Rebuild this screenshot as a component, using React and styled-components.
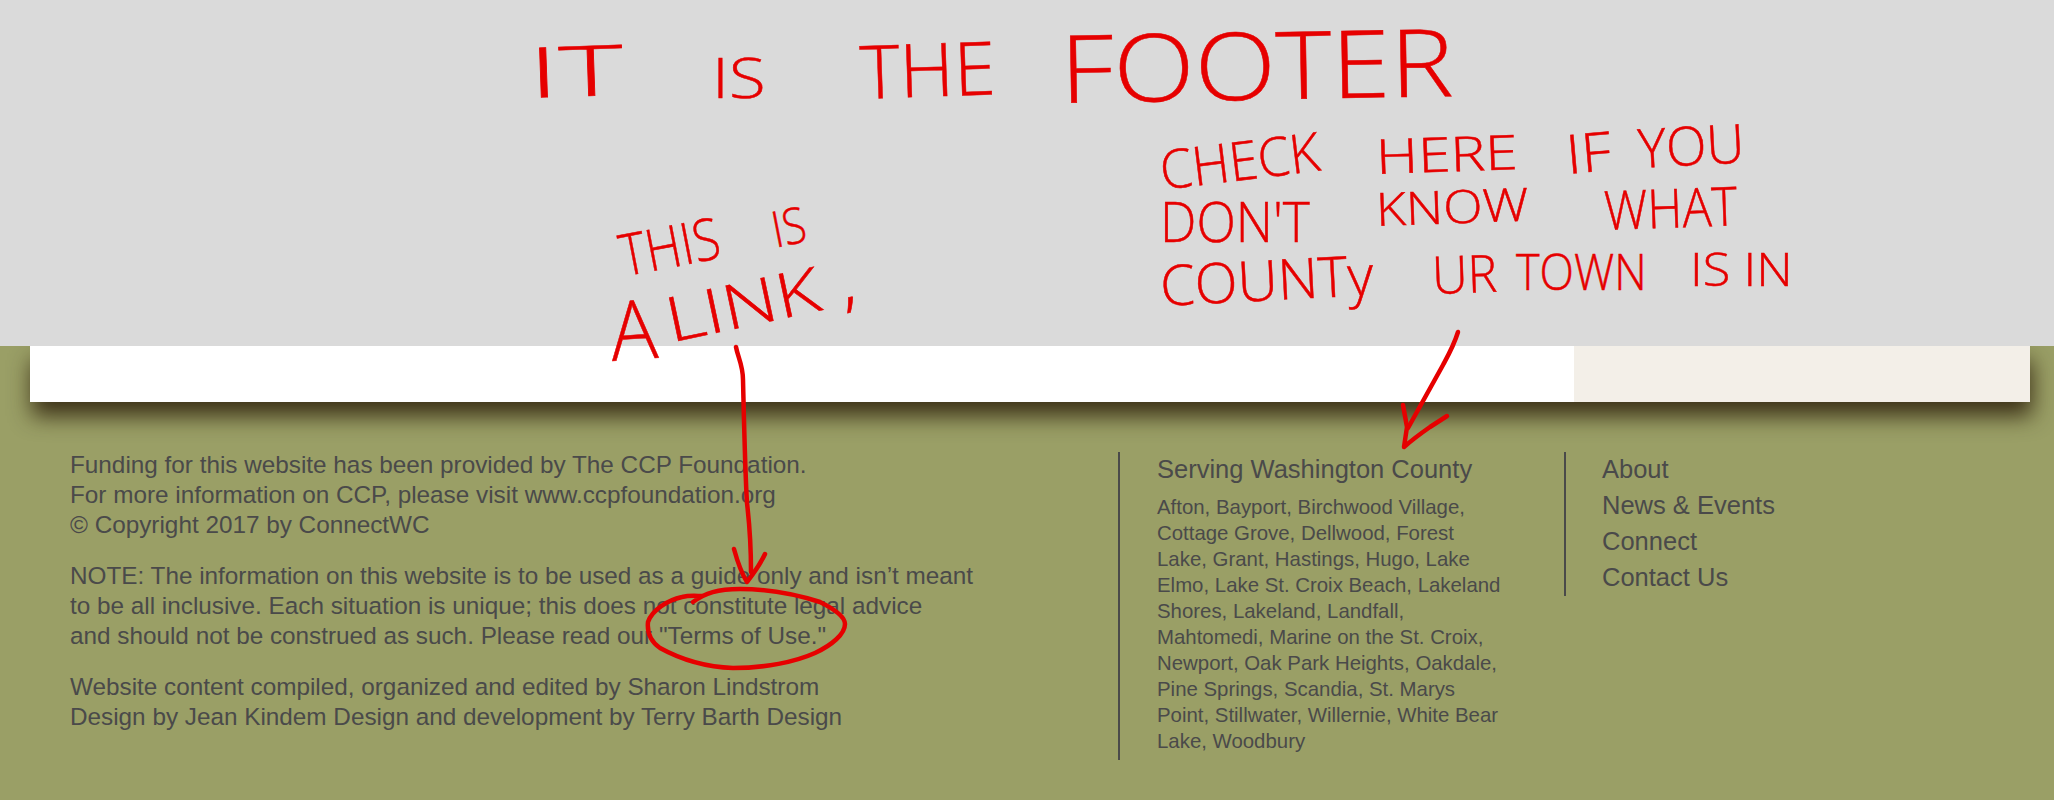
import React from "react";
import styled, { createGlobalStyle } from "styled-components";

const scrawls = [
  { text: "IT", x: 528, y: 36, size: 70, rot: -2, sx: 1.75 },
  { text: "IS", x: 712, y: 48, size: 56, rot: 0, sx: 1.2 },
  { text: "THE", x: 860, y: 34, size: 74, rot: -2, sx: 1.02 },
  { text: "FOOTER", x: 1060, y: 20, size: 94, rot: -1, sx: 1.13 },

  { text: "CHECK", x: 1160, y: 142, size: 54, rot: -7, sx: 0.96 },
  { text: "HERE", x: 1376, y: 132, size: 48, rot: -2, sx: 1.22 },
  { text: "IF", x: 1566, y: 126, size: 54, rot: -5, sx: 1.1 },
  { text: "YOU", x: 1638, y: 120, size: 54, rot: -3, sx: 0.98 },

  { text: "DON'T", x: 1160, y: 192, size: 56, rot: 0, sx: 0.92 },
  { text: "KNOW", x: 1376, y: 186, size: 46, rot: -2, sx: 1.12 },
  { text: "WHAT", x: 1604, y: 182, size: 54, rot: -2, sx: 0.9 },

  { text: "COUNTy", x: 1160, y: 256, size: 56, rot: -3, sx: 1.0 },
  { text: "UR", x: 1432, y: 248, size: 52, rot: -2, sx: 0.95 },
  { text: "TOWN", x: 1516, y: 246, size: 50, rot: 0, sx: 0.9 },
  { text: "IS IN", x: 1690, y: 246, size: 46, rot: 0, sx: 1.1 },

  { text: "THIS", x: 620, y: 226, size: 58, rot: -11, sx: 0.85 },
  { text: "IS", x: 772, y: 204, size: 50, rot: -11, sx: 0.85 },
  { text: "A", x: 610, y: 288, size: 82, rot: -4, sx: 0.95 },
  { text: "LINK ,", x: 666, y: 288, size: 62, rot: -12, sx: 1.22 },
];

const links = ["About", "News & Events", "Connect", "Contact Us"];

const App = () => (
  <Page>
    <GlobalStyle />
    <Note />
    <Footer>
      <Card>
        <CardMain />
        <CardAside />
      </Card>
      <Columns>
        <Credits>
          <Para>
            Funding for this website has been provided by The CCP Foundation.
            <br />
            For more information on CCP, please visit www.ccpfoundation.org
            <br />© Copyright 2017 by ConnectWC
          </Para>
          <Para>
            NOTE: The information on this website is to be used as a guide only and isn’t meant
            <br />
            to be all inclusive. Each situation is unique; this does not constitute legal advice
            <br />
            and should not be construed as such. Please read our <TermsLink href="#">"Terms of Use."</TermsLink>
          </Para>
          <Para>
            Website content compiled, organized and edited by Sharon Lindstrom
            <br />
            Design by Jean Kindem Design and development by Terry Barth Design
          </Para>
        </Credits>
        <County>
          <CountyTitle>Serving Washington County</CountyTitle>
          <Towns>
            Afton, Bayport, Birchwood Village, Cottage Grove, Dellwood, Forest Lake, Grant, Hastings,
            Hugo, Lake Elmo, Lake St. Croix Beach, Lakeland Shores, Lakeland, Landfall, Mahtomedi,
            Marine on the St. Croix, Newport, Oak Park Heights, Oakdale, Pine Springs, Scandia,
            St. Marys Point, Stillwater, Willernie, White Bear Lake, Woodbury
          </Towns>
        </County>
        <LinkList>
          {links.map((l) => (
            <FooterLink key={l} href="#">{l}</FooterLink>
          ))}
        </LinkList>
      </Columns>
    </Footer>

    {scrawls.map((s, i) => (
      <Scrawl key={i} $x={s.x} $y={s.y} $size={s.size} $rot={s.rot} $sx={s.sx}>
        {s.text}
      </Scrawl>
    ))}
    <Marks viewBox="0 0 2054 800">
      {/* arrow down to the terms link */}
      <path d="M736 347 C738 358 743 365 743 380 C744 420 745 470 747 503 C749 520 751 540 751 572" />
      <path d="M734 549 C737 560 742 574 747 582 C753 574 760 565 765 554" />
      {/* ring round the terms link */}
      <path d="M693 602 C705 593 718 589 740 589 C765 589 795 594 820 602 C832 608 845 616 845 624 C845 634 832 645 815 653 C795 662 765 668 733 668 C705 667 680 659 660 648 C650 641 647 632 648 622 C652 610 668 600 682 597 C690 595 697 596 702 596" />
      {/* arrow down to the county heading */}
      <path d="M1458 332 C1454 345 1450 352 1443 365 L1408 428" />
      <path d="M1403 405 L1407 427 L1404 447 C1412 440 1420 434 1430 427 L1447 416" />
    </Marks>
  </Page>
);

const GlobalStyle = createGlobalStyle`
  html, body {
    margin: 0;
    padding: 0;
    background: #9a9f66;
  }
`;

const Page = styled.div`
  position: relative;
  width: 2054px;
  height: 800px;
  overflow: hidden;
  font-family: "Liberation Sans", Arial, sans-serif;
  color: #4a4a4a;
`;

const Note = styled.div`
  height: 346px;
  background: #dadada;
`;

const Footer = styled.footer`
  height: 454px;
  overflow: hidden;
  background: #9a9f66;
`;

const Card = styled.div`
  display: flex;
  height: 56px;
  margin: 0 24px 0 30px;
  box-shadow: 2px 14px 22px rgba(45, 30, 10, 0.85);
`;

const CardMain = styled.div`
  flex: 1;
  background: #fff;
`;

const CardAside = styled.div`
  width: 456px;
  background: #f3efe8;
`;

const Columns = styled.div`
  display: flex;
  align-items: flex-start;
  padding: 48px 0 0 70px;
`;

const Credits = styled.div`
  width: 1048px;
  font-size: 24.3px;
  line-height: 30px;
`;

const Para = styled.p`
  margin: 0 0 21px;
`;

const TermsLink = styled.a`
  color: inherit;
  text-decoration: none;
`;

const County = styled.div`
  width: 407px;
  height: 308px;
  margin-top: 2px;
  padding-left: 37px;
  border-left: 2px solid #4a4a4a;
`;

const CountyTitle = styled.h3`
  margin: 0 0 7px;
  font-size: 25.5px;
  line-height: 35px;
  font-weight: 400;
`;

const Towns = styled.p`
  width: 350px;
  margin: 0;
  font-size: 20.4px;
  line-height: 26px;
`;

const LinkList = styled.nav`
  display: flex;
  flex-direction: column;
  height: 144px;
  margin-top: 2px;
  padding-left: 36px;
  border-left: 2px solid #4a4a4a;
`;

const FooterLink = styled.a`
  font-size: 25.5px;
  line-height: 36px;
  color: inherit;
  text-decoration: none;

  &:first-child {
    margin-top: -1px;
  }
`;

const Scrawl = styled.span`
  position: absolute;
  left: ${(p) => p.$x}px;
  top: ${(p) => p.$y - p.$size * 0.15}px;
  font-family: "Open Sans", "Liberation Sans", sans-serif;
  font-weight: 300;
  font-size: ${(p) => p.$size}px;
  line-height: 1.3;
  white-space: nowrap;
  color: #e60000;
  -webkit-text-stroke: 0.5px #e60000;
  transform-origin: left center;
  transform: rotate(${(p) => p.$rot}deg) scaleX(${(p) => p.$sx});
`;

const Marks = styled.svg`
  position: absolute;
  left: 0;
  top: 0;
  width: 2054px;
  height: 800px;
  pointer-events: none;

  path {
    fill: none;
    stroke: #e60000;
    stroke-width: 4.5;
    stroke-linecap: round;
    stroke-linejoin: round;
  }
`;

export default App;
